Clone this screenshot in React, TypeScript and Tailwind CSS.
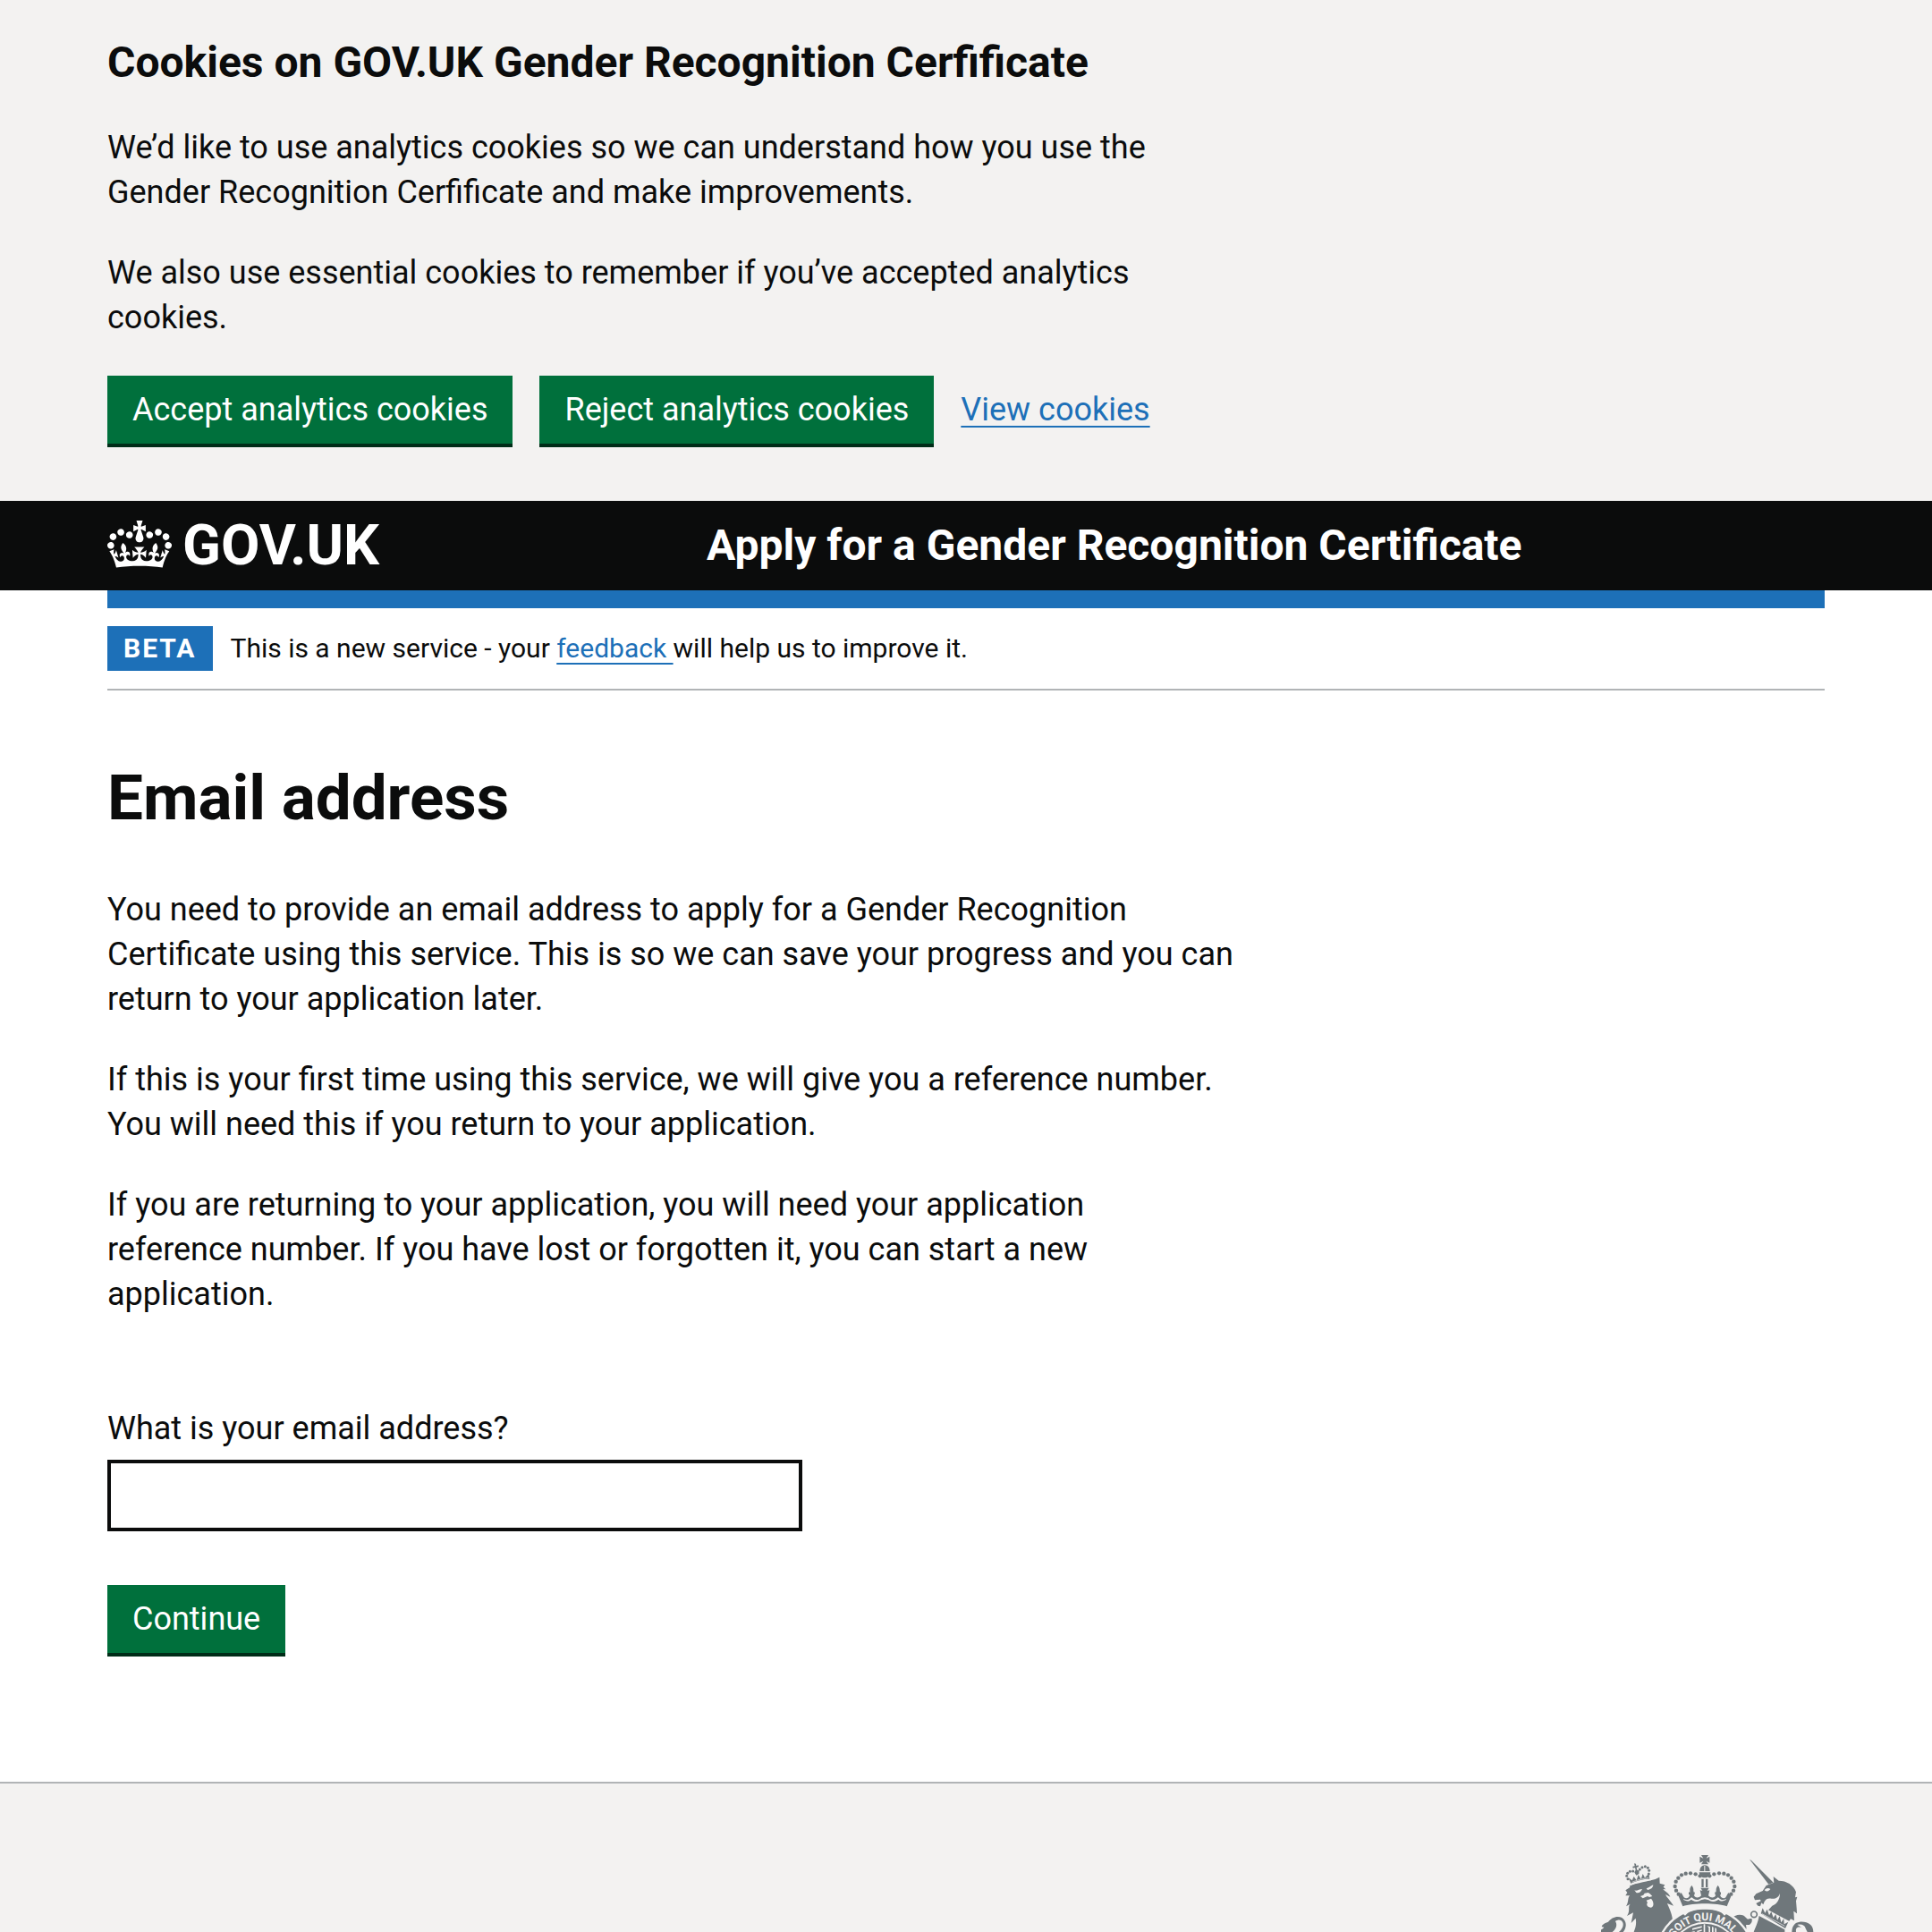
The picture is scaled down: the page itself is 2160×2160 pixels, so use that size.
import type { ReactNode } from "react";

const CROWN =
  "M25 30.2c3.5 1.5 7.7-.2 9.1-3.7 1.5-3.6-.2-7.8-3.9-9.2-3.6-1.4-7.6.3-9.1 3.9-1.4 3.5.3 7.5 3.9 9zM9 39.5c3.6 1.5 7.8-.2 9.2-3.7 1.5-3.6-.2-7.8-3.9-9.1-3.6-1.5-7.6.2-9.1 3.8-1.4 3.5.3 7.5 3.8 9zM4.4 57.2c3.5 1.5 7.7-.2 9.1-3.8 1.5-3.6-.2-7.7-3.9-9.1-3.5-1.5-7.6.3-9.1 3.8-1.4 3.5.3 7.6 3.9 9.1zm38.3-21.4c3.5 1.5 7.7-.2 9.1-3.8 1.5-3.6-.2-7.7-3.9-9.1-3.6-1.5-7.6.3-9.1 3.8-1.3 3.6.4 7.7 3.9 9.1zm64.4-5.6c-3.6 1.5-7.8-.2-9.1-3.7-1.5-3.6.2-7.8 3.8-9.2 3.6-1.4 7.7.3 9.2 3.9 1.3 3.5-.4 7.5-3.9 9zm15.9 9.3c-3.6 1.5-7.7-.2-9.1-3.7-1.5-3.6.2-7.8 3.7-9.1 3.6-1.5 7.7.2 9.2 3.8 1.5 3.5-.3 7.5-3.8 9zm4.7 17.7c-3.6 1.5-7.8-.2-9.2-3.8-1.5-3.6.2-7.7 3.9-9.1 3.6-1.5 7.7.3 9.2 3.8 1.3 3.5-.4 7.6-3.9 9.1zM89.3 35.8c-3.6 1.5-7.8-.2-9.2-3.8-1.4-3.6.2-7.7 3.9-9.1 3.6-1.5 7.7.3 9.2 3.8 1.4 3.6-.3 7.7-3.9 9.1zM69.7 17.7l8.9 4.7V9.3l-8.9 2.8c-.2-.3-.5-.6-.9-.9L72.4 0H59.6l3.5 11.2c-.3.3-.6.5-.9.9l-8.8-2.8v13.1l8.8-4.7c.3.3.6.7.9.9l-5 15.4v.1c-.2.8-.4 1.6-.4 2.4 0 4.1 3.1 7.5 7 8.1h.2c.3 0 .7.1 1 .1.4 0 .7 0 1-.1h.2c4-.6 7.1-4.1 7.1-8.1 0-.8-.1-1.7-.4-2.4V34l-5.1-15.4c.4-.2.7-.6 1-.9zM66 92.8c16.9 0 32.8 1.1 47.1 3.2 4-16.9 8.9-26.7 14-33.5l-9.6-3.4c1 4.9 1.1 7.2 0 10.2-1.5-1.4-3-4.3-4.2-8.7L108.6 76c2.8-2 5-3.2 7.5-3.3-4.4 9.4-10 11.9-13.6 11.2-4.3-.8-6.3-4.6-5.6-7.9 1-4.7 5.7-5.9 8-.5 4.3-8.7-3-11.4-7.6-8.8 7.1-7.2 7.9-13.5 2.1-21.1-8 6.1-8.1 12.3-4.5 20.8-4.7-5.4-12.1-2.5-9.5 6.2 3.4-5.2 7.9-2 7.2 3.1-.6 4.3-6.4 7.8-13.5 7.2-10.3-.9-10.9-8-11.2-13.8 2.5-.5 7.1 1.8 11 7.3L80.2 60c-4.1 4.4-8 5.3-12.3 5.4 1.4-4.4 8-11.6 8-11.6H55.5s6.4 7.2 7.9 11.6c-4.2-.1-8-1-12.3-5.4l1.4 16.4c3.9-5.5 8.5-7.7 10.9-7.3-.3 5.8-.9 12.8-11.1 13.8-7.2.6-12.9-2.9-13.5-7.2-.7-5 3.8-8.3 7.1-3.1 2.7-8.7-4.6-11.6-9.4-6.2 3.7-8.5 3.6-14.7-4.6-20.8-5.8 7.6-5 13.9 2.2 21.1-4.7-2.6-11.9.1-7.7 8.8 2.3-5.5 7.1-4.2 8.1.5.7 3.3-1.3 7.1-5.7 7.9-3.5.7-9-1.8-13.5-11.2 2.5.1 4.7 1.3 7.5 3.3l-4.7-15.4c-1.2 4.4-2.7 7.2-4.3 8.7-1.1-3-.9-5.3 0-10.2l-9.5 3.4c5 6.9 9.9 16.7 14 33.5 14.8-2.1 30.8-3.2 47.7-3.2z";

const ARCH_DOTS = [
  [122, 82],
  [107, 76],
  [90, 73],
  [74, 74],
  [60, 79],
  [49, 89],
  [41, 101],
  [38, 117],
  [42, 131],
  [50, 143],
];

const LION_CROWN_DOTS = [
  [120, 92],
  [116, 82],
  [119, 73],
  [127, 67],
  [137, 66],
  [160, 60],
  [168, 53],
  [178, 50],
  [187, 55],
  [191, 64],
  [190, 75],
];

function Crest() {
  const ink = "#6f777b";
  const paper = "#f3f2f1";
  return (
    <svg viewBox="0 0 250 86" className="h-[86px] w-[250px]" role="img" aria-label="Royal coat of arms" fill={ink}>
      {/* lion */}
      <g transform="translate(-10 -4) scale(.33333)">
        <path d="M20 270C28 262 34 262 40 254C22 254 40 240 54 236C64 222 84 214 100 222C118 234 116 256 104 270H90C106 256 108 240 98 232C92 228 84 230 78 234C86 246 80 260 68 270Z" />
        <path d="M112 130L126 121L128 112C150 108 190 98 212 93L226 86L227 107L244 112L239 119L247 127L238 126C244 134 258 140 262 152L246 144C250 154 264 166 273 182L252 174C258 190 266 202 270 228L276 236L262 252V270H140C144 258 150 246 146 224L131 240L138 205L117 216C130 196 118 186 128 176L114 184C124 168 118 158 126 148L112 148L118 138Z" />
        <g fill={paper}>
          <path d="M142 130C150 134 158 126 168 126C164 136 156 141 148 138Z" />
          <path d="M182 124C190 122 196 116 205 112C204 122 196 128 186 129Z" />
          <path d="M162 150L172 146L176 140L188 138L194 142L202 150L192 153L186 150L170 157Z" />
          <path d="M182 164L198 158C206 166 210 184 198 188C186 188 180 178 186 172Z" />
        </g>
        <path d="M130 107L122 88L134 97L140 84L149 97L155 78L164 93L170 75L177 88L190 74L193 92C170 92 148 98 130 107Z" />
        <path d="M134 103C150 96 172 90 190 89" stroke={paper} strokeWidth="2" fill="none" />
        <path d="M128 113C146 104 174 96 198 95" stroke={paper} strokeWidth="4" fill="none" />
        <path d="M141 40L147 41L148 48L155 46L156 52L149 53L151 62L158 64L157 75L148 80L142 70L146 62L144 54L137 56L136 50L143 49Z" />
        {LION_CROWN_DOTS.map(([x, y]) => (
          <circle key={`${x}-${y}`} cx={x} cy={y} r="4.5" />
        ))}
      </g>
      {/* unicorn */}
      <g transform="translate(150 -4) scale(.33333)">
        <path d="M48 26L54 30L128 104L112 110Z" />
        <path d="M62 152L70 142L92 132L104 114L130 104L128 84L146 98C172 98 196 112 204 136L201 154L208 152L204 166L206 190L207 208L196 200L198 232L186 226L178 238L104 204L124 182C140 176 150 160 150 140C146 154 134 160 122 158C110 156 104 158 98 168L94 178L88 172L84 184L76 182L70 174L86 166L84 161L66 163Z" />
        <path d="M98 130C104 122 112 122 118 126C112 134 106 136 98 130Z" fill={paper} />
        <path d="M88 184L186 236L172 264L80 212Z" fill={paper} />
        <path d="M86 208L92 190L100 206L107 194L114 214L121 202L128 222L136 210L141 230L149 217L154 238L163 225L164 244L178 236L168 258Z" />
        <path d="M90 209L166 250" stroke={paper} strokeWidth="2" fill="none" />
        <path d="M80 216L166 262V270H62C68 254 76 240 80 216Z" />
        <path d="M-14 226C0 208 28 208 36 222L52 236L48 246L36 246L38 260L24 250L14 236L4 242L16 252L34 258V270H-6Z" />
        <circle cx="63" cy="211" r="10" fill="none" stroke={ink} strokeWidth="5" />
        <path d="M56 226C44 222 34 232 40 244C50 248 58 240 56 226Z" />
        <path d="M190 270C190 250 200 238 216 236C244 234 262 246 262 270H238C236 260 224 252 210 254C202 258 204 264 204 270Z" />
        <path d="M208 246C222 242 234 248 236 258L242 270H230C226 256 218 250 208 246Z" fill={paper} />
      </g>
      {/* garter and imperial crown */}
      <g transform="translate(70 -4) scale(.33333)">
        <circle cx="138" cy="353" r="167" fill={paper} />
        <circle cx="138" cy="353" r="160" />
        <circle cx="138" cy="353" r="117" fill={paper} />
        <circle cx="138" cy="353" r="111" />
        <path
          d="M134 244h5v28h-5zM96 258l32-8v5l-32 8zM112 266l16-4v4l-16 5zM146 250l10 2v18h-5v-14zM162 252l5 2v16h-5zM172 256l5 2v12h-5zM84 272l20-5v5z"
          fill={paper}
        />
        <path
          d="M62 184C90 168 186 168 214 184C220 198 214 208 204 215L196 207C176 190 100 190 80 207L72 215C62 208 56 198 62 184Z"
          fill={paper}
        />
        <path id="garter-arc" d="M16 353A122 122 0 0 1 260 353" fill="none" />
        <text fill={paper} fontFamily="Roboto, sans-serif" fontSize="36" fontWeight="700" textAnchor="middle">
          <textPath href="#garter-arc" startOffset="48%">
            SOIT QUI MAL
          </textPath>
        </text>
        <path d="M50 150L59 138L68 154C76 160 84 156 87 148L88 136L94 114L101 136L102 148C108 158 118 156 126 148L122 130L130 132L124 122H152L146 132L154 130L150 148C158 156 168 158 174 148L175 136L182 114L189 136L190 148C194 156 202 160 208 154L217 138L226 150L212 184C180 172 96 172 64 184Z" />
        <g fill={paper}>
          <path d="M66 158c8 6 18 6 24-2l4-2 6 4c8 6 18 6 26-2l12-2 12 2c8 8 18 8 26 2l6-4 4 2c6 8 16 8 24 2l-2 5c-8 5-18 5-24-2l-5 3c-10 6-20 5-28-1l-13-3-13 3c-8 6-18 7-28 1l-5-3c-6 7-16 7-24 2z" />
          <circle cx="80" cy="149" r="5" />
          <circle cx="112" cy="147" r="5" />
          <circle cx="164" cy="147" r="5" />
          <circle cx="196" cy="149" r="5" />
        </g>
        <path d="M94 114C101 122 102 130 97 138L104 136V145H84V136L91 138C86 130 87 122 94 114ZM182 114C189 122 190 130 185 138L192 136V145H172V136L179 138C174 130 175 122 182 114Z" />
        <path d="M126 12H150L143 23L154 17V38L143 32L150 43H126L133 32L121 38V17L133 23Z" />
        <path d="M121 66C122 52 128 47 138 46C148 47 154 52 155 66ZM119 70H157C156 82 148 88 138 88S120 82 119 70Z" />
        <path d="M136 48h3v18h-3z" fill={paper} />
        <path d="M127 92h7v28h-7zM141 92h7v28h-7z" />
        {ARCH_DOTS.map(([x, y]) => (
          <g key={`${x}-${y}`}>
            <circle cx={x} cy={y} r="6.5" />
            <circle cx={276 - x} cy={y} r="6.5" />
          </g>
        ))}
      </g>
    </svg>
  );
}

function Button({ children, type = "button" }: { children: ReactNode; type?: "button" | "submit" }) {
  return (
    <button
      type={type}
      className="h-[76px] cursor-pointer bg-[#00703c] px-7 text-[36px] leading-[38px] text-white shadow-[0_4px_0_#002d18]"
    >
      {children}
    </button>
  );
}

function TextLink({ children }: { children: ReactNode }) {
  return (
    <a href="#" className="text-[#1d70b8] underline decoration-2 underline-offset-[6px]">
      {children}
    </a>
  );
}

export default function App() {
  return (
    <div className="bg-white font-['Roboto',sans-serif] text-[36px] leading-[50px] text-[#0b0c0c]">
      <section aria-label="Cookies on GOV.UK" className="bg-[#f3f2f1] px-[120px] pt-10 pb-16">
        <h2 className="mb-10 text-[48px] leading-[60px] font-bold">
          Cookies on GOV.UK Gender Recognition Cerfificate
        </h2>
        <div className="flex max-w-[1270px] flex-col gap-10">
          <p>
            We’d like to use analytics cookies so we can understand how you use the Gender Recognition Cerfificate and
            make improvements.
          </p>
          <p>We also use essential cookies to remember if you’ve accepted analytics cookies.</p>
          <div className="flex items-center gap-[30px]">
            <Button>Accept analytics cookies</Button>
            <Button>Reject analytics cookies</Button>
            <TextLink>View cookies</TextLink>
          </div>
        </div>
      </section>

      <header className="bg-[#0b0c0c] px-[120px] text-white">
        <div className="flex h-[100px] items-center">
          <a href="#" className="flex w-[670px] items-center gap-3">
            <svg viewBox="0 0 132 97" className="mb-1 h-[53px] w-[72px]" fill="currentColor" aria-hidden="true">
              <path d={CROWN} />
            </svg>
            <span className="text-[63px] leading-[62px] font-bold">GOV.UK</span>
          </a>
          <a href="#" className="text-[48px] leading-[60px] font-bold">
            Apply for a Gender Recognition Certificate
          </a>
        </div>
      </header>

      <div className="px-[120px]">
        <div className="h-5 bg-[#1d70b8]" />
        <div className="flex items-center gap-5 border-b-2 border-[#b1b4b6] py-5 text-[30px]">
          <strong className="bg-[#1d70b8] px-[18px] font-bold tracking-[2px] text-white">BETA</strong>
          <span>
            This is a new service - your <TextLink>feedback </TextLink>will help us to improve it.
          </span>
        </div>

        <main className="pt-20 pb-36">
          <h1 className="mb-[60px] text-[71px] leading-[80px] font-bold">Email address</h1>
          <div className="flex max-w-[1270px] flex-col gap-10">
            <p>
              You need to provide an email address to apply for a Gender Recognition Certificate using this service.
              This is so we can save your progress and you can return to your application later.
            </p>
            <p>
              If this is your first time using this service, we will give you a reference number. You will need this if
              you return to your application.
            </p>
            <p className="max-w-[1240px]">
              If you are returning to your application, you will need your application reference number. If you have
              lost or forgotten it, you can start a new application.
            </p>
          </div>
          <form className="mt-[100px] flex flex-col items-start">
            <label htmlFor="email">What is your email address?</label>
            <input
              id="email"
              type="email"
              className="mt-[10px] mb-[60px] h-20 w-full max-w-[777px] border-4 border-[#0b0c0c] bg-white px-2 outline-none"
            />
            <Button type="submit">Continue</Button>
          </form>
        </main>
      </div>

      <footer className="flex justify-end border-t-2 border-[#b1b4b6] bg-[#f3f2f1] px-[120px] pt-20">
        <Crest />
      </footer>
    </div>
  );
}
